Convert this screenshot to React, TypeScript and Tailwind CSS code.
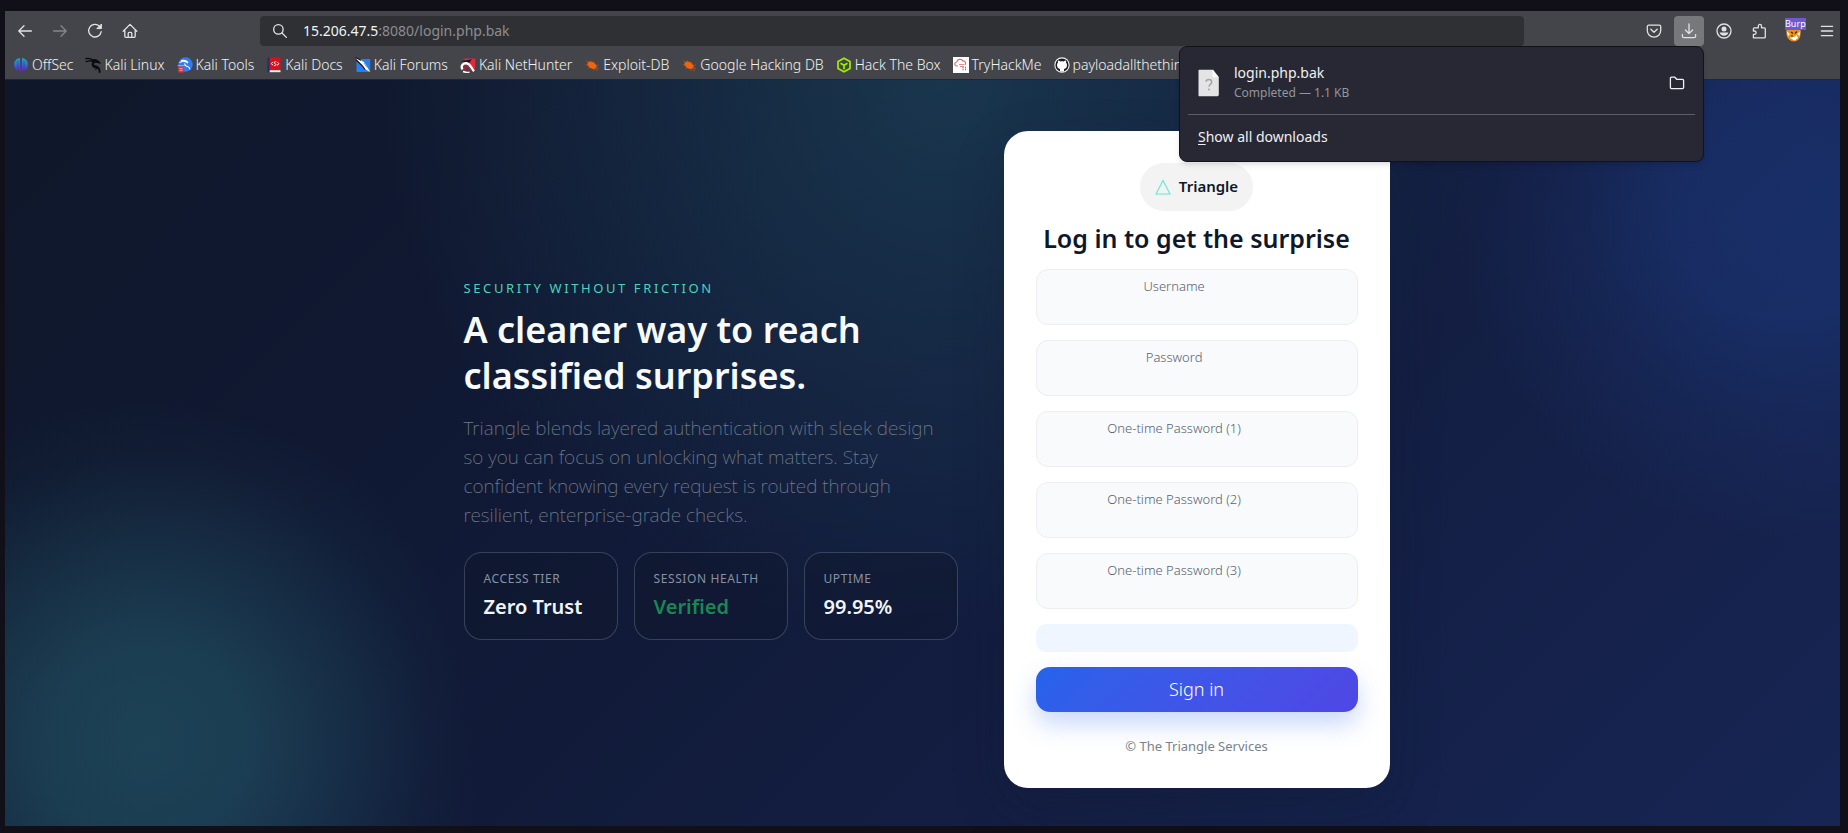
import React from "react";

const stroke = {
  fill: "none",
  stroke: "currentColor",
  strokeWidth: 1.3,
  strokeLinecap: "round" as const,
  strokeLinejoin: "round" as const,
};

const BackIcon = () => (
  <svg viewBox="0 0 16 16" className="size-4" {...stroke} aria-hidden="true">
    <path d="M14.4 8H1.8M7 2.8 1.8 8 7 13.2" />
  </svg>
);

const ForwardIcon = () => (
  <svg viewBox="0 0 16 16" className="size-4" {...stroke} aria-hidden="true">
    <path d="M1.6 8h12.6M9 2.8 14.2 8 9 13.2" />
  </svg>
);

const ReloadIcon = () => (
  <svg viewBox="0 0 16 16" className="size-4" {...stroke} aria-hidden="true">
    <path d="M14.2 8.6A6.3 6.3 0 1 1 12.6 3.4" />
    <path d="M14.4 1.4v4.2h-4.2z" fill="currentColor" strokeWidth={1} />
  </svg>
);

const HomeIcon = () => (
  <svg viewBox="0 0 16 16" className="size-4" {...stroke} aria-hidden="true">
    <path d="M1.2 8.2 8 1.4l6.8 6.8M2.8 7v6.3c0 .6.5 1.1 1.1 1.1h8.2c.6 0 1.1-.5 1.1-1.1V7" />
    <path d="M6.2 14.2V10.4a1 1 0 0 1 1-1h1.6a1 1 0 0 1 1 1v3.8" />
  </svg>
);

const SearchIcon = () => (
  <svg viewBox="0 0 16 16" className="size-4" {...stroke} aria-hidden="true">
    <circle cx="6.4" cy="6.4" r="4.7" />
    <path d="m10 10 4.4 4.4" />
  </svg>
);

const PocketIcon = () => (
  <svg viewBox="0 0 16 16" className="size-4" {...stroke} aria-hidden="true">
    <path d="M2.6 2.2h10.8c.7 0 1.3.6 1.3 1.3v4a6.7 6.7 0 0 1-13.4 0v-4c0-.7.6-1.3 1.3-1.3z" />
    <path d="M4.8 6.2 8 9.3l3.2-3.1" />
  </svg>
);

const DownloadIcon = () => (
  <svg viewBox="0 0 16 16" className="size-4" {...stroke} aria-hidden="true">
    <path d="M8 .9v9.6M4.4 7 8 10.6 11.6 7M1.4 11.6v1.6c0 .8.7 1.5 1.5 1.5h10.2c.8 0 1.5-.7 1.5-1.5v-1.6" />
  </svg>
);

const AccountIcon = () => (
  <svg viewBox="0 0 16 16" className="size-4" aria-hidden="true">
    <circle cx="8" cy="8" r="7" fill="none" stroke="currentColor" strokeWidth="1.3" />
    <circle cx="8" cy="6" r="2.5" fill="currentColor" />
    <path d="M3.6 9.6h8.8c-.3 2-2.2 3.1-4.4 3.1s-4.1-1.1-4.4-3.1z" fill="currentColor" />
  </svg>
);

const PuzzleIcon = () => (
  <svg viewBox="0 0 16 16" className="size-4" {...stroke} aria-hidden="true">
    <path d="M2.4 14.8V11.4H3.4a1.7 1.7 0 0 0 0-3.4H2.4V5.7c0-.5.4-.9.9-.9h4V3a1.6 1.6 0 0 1 3.2 0v1.8h2.9c.5 0 .9.4.9.9v8.2c0 .5-.4.9-.9.9z" />
  </svg>
);

const BurpIcon = () => (
  <svg viewBox="0 0 20 24" className="h-6 w-5" aria-hidden="true">
    <path d="M2.5 9h14v6c0 4.5-3 7.5-6.5 7.5S2.5 19.5 2.5 15z" fill="#e8931c" />
    <path d="M2.5 12 6 15l-2 2zM16.5 12 13 15l2.5 2z" fill="#f6f2ea" />
    <path d="M6 19c2-1.5 4 .5 6.5-3l1.5 3-3.5 2.5z" fill="#fff" />
    <path d="M7 13l2 1.5M13 12.5l-2 2M7 17h2" stroke="#4a2608" strokeWidth="1.2" />
  </svg>
);

const MenuIcon = () => (
  <svg viewBox="0 0 16 16" className="size-4" {...stroke} aria-hidden="true">
    <path d="M2.4 3.3h11.2M2.4 8h11.2M2.4 12.7h11.2" />
  </svg>
);

const FolderIcon = () => (
  <svg viewBox="0 0 16 16" className="size-4" {...stroke} aria-hidden="true">
    <path d="M1.4 3.3c0-.6.5-1.1 1.1-1.1h3.3L7.7 4.3h5.8c.6 0 1.1.5 1.1 1.1v7.2c0 .6-.5 1.1-1.1 1.1h-11c-.6 0-1.1-.5-1.1-1.1z" />
  </svg>
);

const FileIcon = () => (
  <svg viewBox="0 0 22 28" className="h-7 w-[22px]" aria-hidden="true">
    <path d="M1.5.8h13.7l5.6 7.4v17.6c0 .8-.6 1.4-1.4 1.4H1.5c-.6 0-1-.4-1-1V1.8c0-.6.4-1 1-1z" fill="#e4e4e4" />
    <path d="M14.5.8v7.4h6.3z" fill="#fbfbfb" />
    <path d="M8 12.8c.2-3 5.7-3 5.7.2 0 2.3-2.7 2.4-2.7 4.7" fill="none" stroke="#a5a5a5" strokeWidth="1.5" />
    <circle cx="11" cy="20.5" r="1" fill="#a5a5a5" />
  </svg>
);

const OffSecIcon = () => (
  <svg viewBox="0 0 16 16" className="size-4" aria-hidden="true">
    <defs>
      <linearGradient id="offsec" x1="0" y1="0" x2="0" y2="1">
        <stop offset="0.1" stopColor="#1fa3b8" />
        <stop offset="0.55" stopColor="#3567cf" />
        <stop offset="1" stopColor="#6a1fc4" />
      </linearGradient>
    </defs>
    <path d="M7 1v13C3 13.5 1 11 1 7.5S3.5 1.5 7 1zM9 1v13c4-.5 6-3 6-6.500S12.5 1.5 9 1z" fill="url(#offsec)" />
    <path d="M7.5 3h1v12h-1z" fill="#5b32c6" />
    <path d="M5 3.5v8.5M11 3.5v8.5" stroke="#263b73" strokeWidth=".5" />
  </svg>
);

const DragonIcon = () => (
  <svg viewBox="0 0 16 16" className="size-4" fill="none" stroke="#08090b" strokeLinecap="round" aria-hidden="true">
    <path d="M.6 1.6c3-.6 5.8 0 8 2M1 4.6c2.5-1 5-.9 7.4.4" strokeWidth="1.2" />
    <path d="M7.5 3.5c2-.8 4.5-.4 6.2 1.7-2.5-.5-5-.2-5.9 1.2-.9 1.8 1 2.4 3 2.9 2.4.6 3.900 2.5 3.8 5.7" strokeWidth="1.900" />
    <path d="M7.6 6.5c-.6 2.5.6 3.8 2.6 4.1M12.5 10.5l-1.8 1.8" strokeWidth="1.2" />
  </svg>
);

const ToolsIcon = () => (
  <svg viewBox="0 0 16 16" className="size-4" aria-hidden="true">
    <circle cx="8.5" cy="7.5" r="7.2" fill="#2f7cf6" />
    <path d="M2.5 5.5c3-1.5 6-1.2 8.5.6M4 3.6c3-.7 5.5 0 7 1.8M8 6.5c-.8 2 1 2.5 2.6 3 1.4.4 2.2 1.4 2.3 3" fill="none" stroke="#fff" strokeWidth="1.2" />
    <path d="M1 9.5h6.2l-.6 6H1.6z" fill="#e5343f" />
    <path d="M.6 8.6h7M2.5 11.5h3.2M2.5 13.3h3.2" stroke="#f7a1a6" strokeWidth=".8" />
  </svg>
);

const DocsIcon = () => (
  <svg viewBox="0 0 16 16" className="size-4" aria-hidden="true">
    <path d="M1.5.5h2.2v14.7H1.500z" fill="#1d2f6f" />
    <path d="M3.7.5h10.8v12.7H3.700z" fill="#d5121d" />
    <path d="M3.7 13.2h10.8v2H3.700z" fill="#efeaea" />
    <path d="M6.8 5 5.2 6.7l2 1.5M11.5 5.2l1.5 1.6-2.2 1.6" fill="none" stroke="#fff" strokeWidth=".9" />
    <path d="M10.3 4.8c-2.6-.4-2.6 1.5-1.2 1.900s1.2 2.1-1.1 1.9" fill="none" stroke="#fff" strokeWidth=".9" />
  </svg>
);

const ForumsIcon = () => (
  <svg viewBox="0 0 16 16" className="size-4" aria-hidden="true">
    <path d="M1.5 2h13.7v13H1.5z" fill="#2380f4" />
    <path d="M.5.5 9 5l3 4.5 3 5.5-5-3-4-4.5z" fill="#fff" />
    <path d="M.5.5 6 3.2M1 3l6 5.5 3 4" fill="none" stroke="#15181d" strokeWidth="1.2" />
    <path d="m9 6 3 4.5" stroke="#666f7c" strokeWidth=".7" />
  </svg>
);

const NetHunterIcon = () => (
  <svg viewBox="0 0 16 16" className="size-4" aria-hidden="true">
    <path d="M3.5 1.5h11.7v11z" fill="#e8253b" />
    <path d="M1 4.5 12 2.2 9 6z" fill="#15181d" />
    <path d="M2.5 12.5C.5 9 3 5.8 6.5 6.3c4 .5 4.5 4.7 7.5 7.9" fill="none" stroke="#fff" strokeWidth="2.4" />
    <path d="M5.5 13.5C3.5 11 4.5 8.8 6.5 8.8c2 .2 2.5 2.7 5 5" fill="none" stroke="#c81d33" strokeWidth="1.3" />
    <path d="M3 14.5c2 .9 4.5 1 6.5.6" fill="none" stroke="#fff" strokeWidth="1.4" />
  </svg>
);

const SpiderIcon = () => (
  <svg viewBox="0 0 16 16" className="size-4" aria-hidden="true">
    <ellipse cx="8" cy="8.2" rx="5" ry="3.2" transform="rotate(32 8 8.2)" fill="#f0640f" />
    <path d="M2.6 3.8 5 6M6 3.5l1 2M10 4.8l-.5 1.5M1.8 7.8 4.5 8M4.5 11.5l2-1.5M14.5 8l-3 .8M14.8 11.5l-2.5-.8M10 13.5l-.5-2M13.5 13.8l-2-2" stroke="#d9560c" strokeWidth=".8" />
  </svg>
);

const CubeIcon = () => (
  <svg viewBox="0 0 16 16" className="size-4" fill="none" stroke="#9fef00" strokeWidth="1.7" strokeLinejoin="round" aria-hidden="true">
    <path d="M8 1.2 14 4.6v6.8L8 14.8 2 11.4V4.6z" />
    <path d="M4.5 6.2 8 8.2l3.5-2M8 8.2v4" />
  </svg>
);

const TryHackMeIcon = () => (
  <svg viewBox="0 0 16 16" className="size-4" aria-hidden="true">
    <path d="M0 0h16v16H0z" fill="#fff" />
    <path d="M5 9H3.8a2 2 0 0 1 0-4c.2-2.8 4.6-3.8 6-1 2.4-.3 3.8 2.4 2 4" fill="none" stroke="#e36a72" strokeWidth="1.2" />
    <path d="M6 7.5h5M7 9.5h4" stroke="#e88d93" />
    <path d="M9.5 10.5h1M12 10.5h1M9.5 12.5h1M12 12.5h1" stroke="#777" strokeWidth="1.3" />
  </svg>
);

const GitHubIcon = () => (
  <svg viewBox="0 0 16 16" className="size-4" aria-hidden="true">
    <circle cx="8" cy="8" r="7.7" fill="#f2f2f2" />
    <circle cx="8" cy="8" r="6.6" fill="#1c1e22" />
    <path d="M6 14.5v-2.6c-2-.3-3-1.5-3-3.9 0-1 .3-1.7.9-2.3-.1-.6-.1-1.4.2-2.1.8 0 1.6.4 2.2.9.9-.2 2.5-.2 3.4 0 .6-.5 1.4-.9 2.2-.9.3.7.3 1.5.2 2.1.6.6.9 1.3.9 2.3 0 2.4-1 3.6-3 3.9v2.6z" fill="#fff" />
  </svg>
);

const bookmarks = [
  { name: "OffSec", Icon: OffSecIcon },
  { name: "Kali Linux", Icon: DragonIcon },
  { name: "Kali Tools", Icon: ToolsIcon },
  { name: "Kali Docs", Icon: DocsIcon },
  { name: "Kali Forums", Icon: ForumsIcon },
  { name: "Kali NetHunter", Icon: NetHunterIcon },
  { name: "Exploit-DB", Icon: SpiderIcon },
  { name: "Google Hacking DB", Icon: SpiderIcon },
  { name: "Hack The Box", Icon: CubeIcon },
  { name: "TryHackMe", Icon: TryHackMeIcon },
  { name: "payloadallthethings", Icon: GitHubIcon },
];

const stats = [
  { label: "Access tier", value: "Zero Trust", tone: "text-slate-100" },
  { label: "Session health", value: "Verified", tone: "text-[#198754]" },
  { label: "Uptime", value: "99.95%", tone: "text-slate-100" },
];

const fields = [
  { id: "username", label: "Username", type: "text" },
  { id: "password", label: "Password", type: "password" },
  { id: "otp1", label: "One-time Password (1)", type: "text" },
  { id: "otp2", label: "One-time Password (2)", type: "text" },
  { id: "otp3", label: "One-time Password (3)", type: "text" },
];

type ToolButtonProps = { label: string; active?: boolean; muted?: boolean; children: React.ReactNode };

function ToolButton({ label, active = false, muted = false, children }: ToolButtonProps) {
  return (
    <button
      type="button"
      aria-label={label}
      className={`flex size-[30px] items-center justify-center rounded ${active ? "bg-[#77787c]" : ""} ${muted ? "text-[#85868a]" : "text-[#e2e2e4]"}`}
    >
      {children}
    </button>
  );
}

function DownloadsPanel() {
  return (
    <div className="absolute top-full right-0 z-10 w-[525px] rounded-lg border border-[#121319] bg-[#272833] px-2 pt-4 pb-[14px] text-sm text-[#f0f0f2] shadow-md">
      <div className="flex items-center gap-[14px] px-[10px]">
        <FileIcon />
        <div className="flex-1">
          <div className="leading-5">login.php.bak</div>
          <div className="text-xs leading-5 text-[#94959c]">Completed — 1.1 KB</div>
        </div>
        <button type="button" aria-label="Show in folder">
          <FolderIcon />
        </button>
      </div>
      <hr className="mt-[11px] border-[#5c5d66]" />
      <button type="button" className="mt-3 block px-[10px] leading-5">
        <span className="underline underline-offset-2">S</span>how all downloads
      </button>
    </div>
  );
}

function BrowserChrome() {
  return (
    <header className="border-b border-[#24262c] bg-[#43454b] text-sm text-[#e6e6e8]">
      <div className="flex h-[39px] items-center pl-[5px]">
        <div className="flex gap-[5px]">
          <ToolButton label="Back"><BackIcon /></ToolButton>
          <ToolButton label="Forward" muted><ForwardIcon /></ToolButton>
          <ToolButton label="Reload"><ReloadIcon /></ToolButton>
          <ToolButton label="Home"><HomeIcon /></ToolButton>
        </div>
        <div className="mx-[115px] flex h-[30px] flex-1 items-center gap-[15px] rounded bg-[#2f3034] px-3">
          <SearchIcon />
          <div role="textbox" aria-label="Address" className="flex-1 text-[#8c8d91]">
            <span className="text-[#f2f2f3]">15.206.47.5</span>:8080/login.php.bak
          </div>
        </div>
        <div className="flex gap-[5px]">
          <ToolButton label="Save to Pocket"><PocketIcon /></ToolButton>
          <div className="relative">
            <ToolButton label="Downloads" active><DownloadIcon /></ToolButton>
            <DownloadsPanel />
          </div>
          <ToolButton label="Account"><AccountIcon /></ToolButton>
          <ToolButton label="Extensions"><PuzzleIcon /></ToolButton>
          <div className="relative">
            <ToolButton label="Burp proxy"><BurpIcon /></ToolButton>
            <span className="absolute top-[2px] left-[6px] bg-[#7059d0] text-[9px] leading-3 text-white">Burp</span>
          </div>
          <button type="button" aria-label="Menu" className="flex h-[30px] w-[26px] items-center justify-center text-[#e2e2e4]"><MenuIcon /></button>
        </div>
      </div>
      <nav aria-label="Bookmarks" className="flex h-[29px] items-center gap-3 overflow-hidden pl-2 font-light text-[#f2f2f3]">
        {bookmarks.map(({ name, Icon }) => (
          <a key={name} href="#" className="flex shrink-0 items-center gap-[3px] whitespace-nowrap">
            <Icon />
            {name}
          </a>
        ))}
      </nav>
    </header>
  );
}

function Hero() {
  return (
    <section>
      <p className="text-[13px] leading-5 tracking-[0.2em] text-[#4fd0bd] uppercase">Security without friction</p>
      <h1 className="mt-[9px] text-[36px] leading-[46px] font-semibold text-slate-50">
        A cleaner way to reach classified surprises.
      </h1>
      <p className="mt-[15px] text-[19px] leading-[29px] font-extralight text-[#727c88]">
        Triangle blends layered authentication with sleek design so you can focus on unlocking what matters. Stay
        confident knowing every request is routed through resilient, enterprise-grade checks.
      </p>
      <dl className="mt-[22px] grid grid-cols-3 gap-4">
        {stats.map((s) => (
          <div key={s.label} className="h-[88px] rounded-[18px] border border-slate-400/30 bg-slate-900/40 px-[19px] pt-4">
            <dt className="text-xs leading-5 tracking-[0.05em] whitespace-nowrap text-[#8891a3] uppercase">{s.label}</dt>
            <dd className={`mt-1 text-xl leading-7 font-semibold ${s.tone}`}>{s.value}</dd>
          </div>
        ))}
      </dl>
    </section>
  );
}

function LoginCard() {
  return (
    <section className="rounded-3xl bg-white px-8 py-8 text-center shadow-[0_20px_50px_rgba(15,23,42,0.25)]">
      <div className="inline-flex h-12 items-center gap-2 rounded-full bg-[#f3f3f3] px-[15px] text-[15px] font-semibold text-slate-900">
        <svg viewBox="0 0 16 16" className="size-4" fill="none" stroke="#5eead4" strokeWidth="1.1" aria-hidden="true">
          <path d="M8 1.5 15 15H1z" />
        </svg>
        Triangle
      </div>
      <h2 className="mt-[10px] text-[25px] leading-[34px] font-semibold whitespace-nowrap text-slate-900">Log in to get the surprise</h2>
      <form className="mt-[14px] flex flex-col gap-[15px]" onSubmit={(e) => e.preventDefault()}>
        {fields.map((f) => (
          <div key={f.id} className="h-14 rounded-xl border border-[#eceef1] bg-slate-50 pt-1.5">
            <label htmlFor={f.id} className="block w-[86%] text-[13px] leading-5 font-light text-[#5b616e]">{f.label}</label>
            <input id={f.id} type={f.type} className="block h-6 w-full bg-transparent px-3 text-left text-base text-slate-900 outline-none" />
          </div>
        ))}
        <div role="status" className="h-7 rounded-[10px] bg-[#f0f6ff]" />
        <button type="submit" className="h-[45px] rounded-[14px] bg-linear-135 from-[#2563eb] to-[#4f46e5] text-lg font-light text-white shadow-[0_12px_24px_rgba(37,99,235,0.25)]">
          Sign in
        </button>
      </form>
      <p className="mt-6 text-[13px] leading-5 text-[#7a818b]">© The Triangle Services</p>
    </section>
  );
}

export default function App() {
  return (
    <div className="flex min-h-screen flex-col bg-[#110f18] pt-[11px] pr-2 pb-[7px] pl-[5px] font-['Noto_Sans',sans-serif]">
      <BrowserChrome />
      <main className="flex flex-1 items-center justify-center bg-[radial-gradient(circle_at_140px_calc(100%-85px),rgba(52,142,150,0.34)_0px,rgba(52,142,150,0.31)_100px,rgba(52,142,150,0.17)_200px,rgba(52,142,150,0.04)_285px,transparent_340px),radial-gradient(circle_at_calc(100%-50px)_120px,rgba(32,72,160,0.36)_0px,rgba(32,72,160,0.32)_120px,rgba(32,72,160,0.14)_220px,transparent_340px),radial-gradient(circle_at_51%_0,rgba(48,130,140,0.27)_0px,rgba(48,130,145,0.15)_250px,transparent_560px),linear-gradient(135deg,#0f172a_0%,#111a38_45%,#172554_100%)] px-4 pt-[50px] pb-[38px] pl-6">
        <div className="grid w-full max-w-[926px] grid-cols-[1fr_386px] items-center gap-[46px]">
          <Hero />
          <LoginCard />
        </div>
      </main>
    </div>
  );
}
